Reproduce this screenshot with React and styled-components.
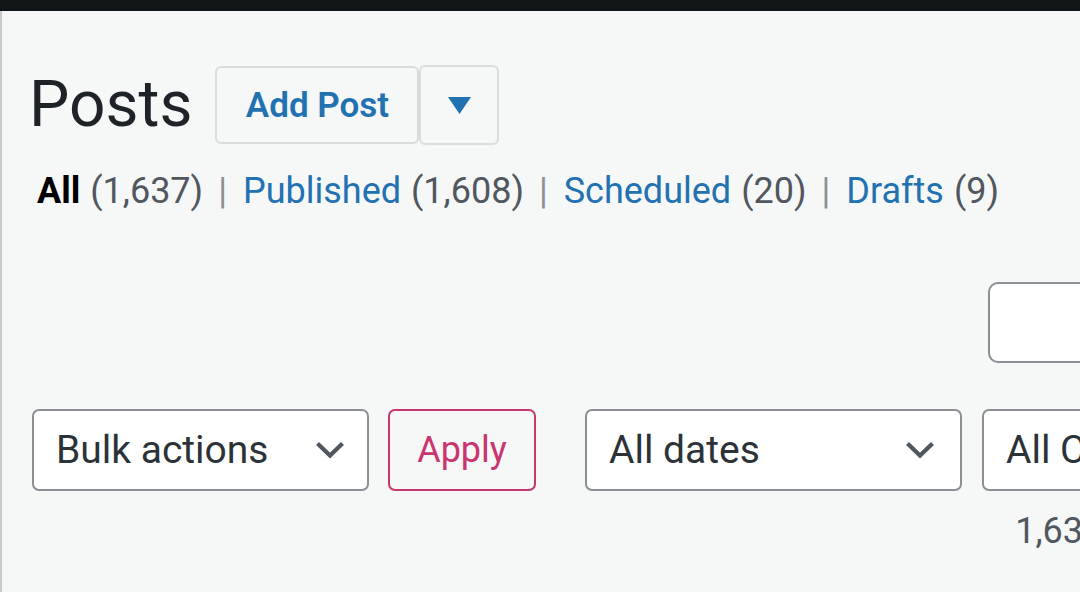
import React from 'react'
import styled, { createGlobalStyle } from 'styled-components'

const GlobalStyle = createGlobalStyle`
  html, body {
    margin: 0;
    padding: 0;
    background: #f6f7f7;
    overflow: hidden;
  }

  body {
    font-family: Roboto, "Liberation Sans", sans-serif;
    color: #1d2327;
  }
`

const AdminBar = styled.div`
  height: 11px;
  background: #101517;
`

const Wrap = styled.div`
  min-height: 581px;
  border-left: 2px solid #c8cacc;
  padding: 54px 0 0 30px;
  box-sizing: border-box;
`

const HeaderRow = styled.div`
  display: flex;
  align-items: center;
  height: 80px;
`

const Title = styled.h1`
  margin: 0 23px 0 -3px;
  font-size: 64px;
  font-weight: 400;
  line-height: 80px;
  color: #1d2327;
`

const ActionGroup = styled.div`
  display: flex;
  align-items: center;
`

const ActionButton = styled.a`
  display: flex;
  align-items: center;
  justify-content: center;
  box-sizing: border-box;
  height: ${({ $tall }) => ($tall ? '80px' : '78px')};
  width: ${({ $width }) => $width}px;
  border: 2px solid #dcdcde;
  border-radius: 6px;
  color: #2271b1;
  font-size: 35px;
  font-weight: 600;
  text-decoration: none;
  cursor: pointer;
`

const SubSubSub = styled.ul`
  display: flex;
  align-items: center;
  list-style: none;
  margin: 23px 0 0;
  padding: 0 0 0 5px;
  font-size: 36px;
  line-height: 46px;
`

const Filter = styled.li`
  display: flex;
  align-items: center;
`

const FilterLink = styled.a`
  color: ${({ $current }) => ($current ? '#000' : '#2271b1')};
  font-weight: ${({ $current }) => ($current ? 700 : 400)};
  text-decoration: none;
`

const Count = styled.span`
  color: #50575e;
  margin-left: 10px;
`

const Sep = styled.span`
  color: #8c8f94;
  margin: 0 16px 0 15px;
  font-size: 36px;
`

const SearchRow = styled.div`
  display: flex;
  justify-content: flex-end;
  margin-top: 68px;
`

const SearchInput = styled.div`
  flex-shrink: 0;
  box-sizing: border-box;
  width: 300px;
  height: 81px;
  margin-right: -208px;
  background: #fff;
  border: 2px solid #8c8f94;
  border-radius: 10px;
`

const Tablenav = styled.div`
  display: flex;
  align-items: center;
  margin-top: 46px;
`

const Select = styled.div`
  flex-shrink: 0;
  display: flex;
  align-items: center;
  justify-content: space-between;
  box-sizing: border-box;
  width: ${({ $width }) => $width}px;
  height: 82px;
  margin-right: ${({ $gap }) => $gap || 0}px;
  padding: 0 ${({ $padRight }) => $padRight || 22}px 0 22px;
  background: #fff;
  border: 2px solid #8c8f94;
  border-radius: 7px;
  color: #2c3338;
  font-size: 39px;
  white-space: nowrap;
  overflow: hidden;
`

const ApplyButton = styled.div`
  flex-shrink: 0;
  display: flex;
  align-items: center;
  justify-content: center;
  box-sizing: border-box;
  width: 148px;
  height: 82px;
  margin-right: 49px;
  border: 2px solid #c9356e;
  border-radius: 7px;
  color: #c9356e;
  font-size: 36px;
`

const DisplayNum = styled.div`
  display: flex;
  justify-content: flex-end;
  margin-top: 17px;
  margin-right: -122px;
  color: #50575e;
  font-size: 36px;
  line-height: 46px;
  white-space: nowrap;
`

const Chevron = () => (
  <svg width='30' height='18' viewBox='0 0 30 18' fill='none'>
    <path d='M2.5 2.5 L15 14.5 L27.5 2.5' stroke='#50575e' strokeWidth='4.2' />
  </svg>
)

const Caret = () => (
  <svg width='23' height='17' viewBox='0 0 23 17'>
    <polygon points='0,0 23,0 11.5,17' fill='#2271b1' />
  </svg>
)

const filters = [
  { label: 'All', count: '1,637', current: true },
  { label: 'Published', count: '1,608' },
  { label: 'Scheduled', count: '20' },
  { label: 'Drafts', count: '9' }
]

const App = () => (
  <>
    <GlobalStyle />
    <AdminBar />
    <Wrap>
      <HeaderRow>
        <Title>Posts</Title>
        <ActionGroup>
          <ActionButton $width={204}>Add Post</ActionButton>
          <ActionButton $width={80} $tall><Caret /></ActionButton>
        </ActionGroup>
      </HeaderRow>

      <SubSubSub>
        {filters.map((f, i) => (
          <Filter key={f.label}>
            <FilterLink $current={f.current}>{f.label}</FilterLink>
            <Count>({f.count})</Count>
            {i < filters.length - 1 && <Sep>|</Sep>}
          </Filter>
        ))}
      </SubSubSub>

      <SearchRow>
        <SearchInput />
      </SearchRow>

      <Tablenav>
        <Select $width={337} $gap={19}>Bulk actions<Chevron /></Select>
        <ApplyButton>Apply</ApplyButton>
        <Select $width={377} $gap={20} $padRight={25}>All dates<Chevron /></Select>
        <Select $width={300}>All Categories<Chevron /></Select>
      </Tablenav>

      <DisplayNum>1,637 items</DisplayNum>
    </Wrap>
  </>
)

export default App
